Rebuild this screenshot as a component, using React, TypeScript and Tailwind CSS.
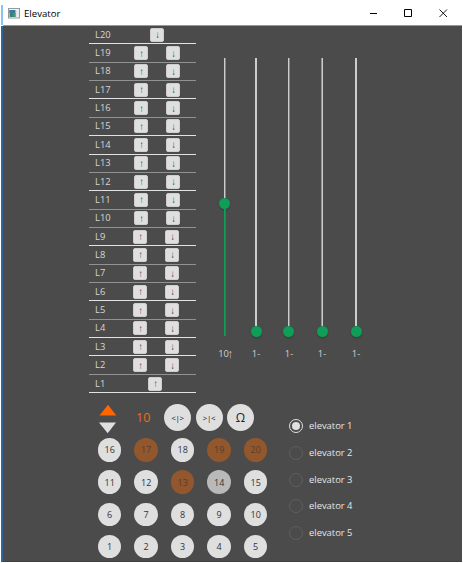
const FLOORS = Array.from({ length: 20 }, (_, i) => 20 - i);
const BRIGHT_RULES = [20, 17, 15, 14, 12, 9, 6, 4, 3, 1];
const KEYS = [
  [16, 17, 18, 19, 20],
  [11, 12, 13, 14, 15],
  [6, 7, 8, 9, 10],
  [1, 2, 3, 4, 5],
];
const LIT = [13, 17, 19, 20];

function CallButton({ arrow, className }: { arrow: string; className: string }) {
  return (
    <button
      className={`h-[14px] w-[14px] shrink-0 rounded-[2px] border border-[#cecece] bg-[#dfdfdf] text-center font-['Liberation_Sans',sans-serif] text-[10px] leading-[11px] text-[#222] ${className}`}
    >
      <span className="inline-block scale-x-75">{arrow}</span>
    </button>
  );
}

function FloorRow({ floor }: { floor: number }) {
  const rule = BRIGHT_RULES.includes(floor) ? 'border-[#e2e2e2]' : 'border-[#929292]';
  return (
    <div className={`flex h-[18.37px] items-center border-b pl-[6px] ${rule}`}>
      <span className="w-[38px] shrink-0 text-[9.4px] leading-[12px] text-[#d6d6d6]">L{floor}</span>
      {floor === 20 && <CallButton arrow="↓" className="ml-[17px]" />}
      {floor === 1 && <CallButton arrow="↑" className="ml-[15px]" />}
      {floor > 1 && floor < 20 && (
        <>
          <CallButton arrow="↑" className={floor > 9 ? 'ml-[1px]' : ''} />
          <CallButton arrow="↓" className="ml-[18px]" />
        </>
      )}
    </div>
  );
}

function Shaft({ floor, active, track, className }: { floor: number; active?: boolean; track: string; className: string }) {
  return (
    <div className={`flex w-[20px] shrink-0 flex-col items-center ${className}`}>
      <div className="flex h-[279px] flex-col items-center">
        <div className={`flex w-[2px] shrink-0 ${active ? 'h-[140px]' : 'h-[268px]'}`}>
          <div className={`w-[1px] ${track === 'right' ? 'bg-[#929292]' : 'bg-[#cdcdcd]'}`} />
          <div className={`w-[1px] ${track === 'left' ? 'bg-[#858585]' : 'bg-[#cdcdcd]'}`} />
        </div>
        <div
          className={`h-[11px] w-[11px] shrink-0 rounded-full bg-[#0f9d58] shadow-[0_1px_2px_rgba(0,0,0,0.25)] ${
            track === 'right' ? 'ml-[1px]' : active || track === 'left' ? '-ml-[1px]' : ''
          }`}
        />
        {active && (
          <div className="mb-[1px] flex w-[2px] flex-1">
            <div className="w-[1px] bg-[#0f9d58]" />
            <div className="w-[1px] bg-[#1b8852]" />
          </div>
        )}
      </div>
      <span className="mt-[10px] flex whitespace-nowrap text-[9.4px] leading-[14px] text-[#ccd0d4]">
        {floor}
        {active ? (
          <span className="-mx-[1px] inline-block scale-y-125 font-['Liberation_Sans',sans-serif] text-[10px]">↑</span>
        ) : (
          '-'
        )}
      </span>
    </div>
  );
}

function RoundButton({ children }: { children: string }) {
  return (
    <button className="h-[27px] w-[27px] rounded-full bg-[#dfdfdf] text-center text-[8px] leading-[27px] tracking-[-0.3px] text-[#111]">
      {children}
    </button>
  );
}

export default function App() {
  return (
    <div className="flex h-[563px] w-[463px] flex-col overflow-hidden bg-white pl-[1px] pr-[1px] font-['Open_Sans','Noto_Sans',sans-serif]">
      <header className="flex h-[25px] shrink-0">
        <div className="mt-[5px] w-[2px] bg-[#8ac4f0]" />
        <svg className="ml-[5px] mt-[8px]" width="12" height="11" viewBox="0 0 12 11">
          <rect x="0.5" y="0.5" width="11" height="9.5" fill="#f4f4f4" stroke="#929ba2" />
          <rect x="1.5" y="2" width="6" height="7" fill="#347e83" />
          <path d="M1.5 2h3v3h-3z" fill="#3c79a3" />
          <path d="M4.5 5h3v4h-3z" fill="#42966e" />
          <path d="M8.5 2v7M10 2v7" stroke="#d6d6d6" strokeWidth=".6" />
        </svg>
        <h1 className="ml-[4px] mt-[7px] text-[9.600px] leading-[14px] text-black">Elevator</h1>
        <svg className="ml-auto mr-[14px] mt-[8px]" width="79" height="10" viewBox="0 0 79 10" fill="none" stroke="#000">
          <path d="M1 5.5h7" />
          <path d="M35.5 1.5h7v7h-7z" />
          <path d="M70.5 1.5l7.5 7.5M78 1.5L70.500 9" strokeWidth=".9" />
        </svg>
      </header>
      <main className="flex h-[537px] shrink-0">
        <div className="mt-[1px] w-[2px] shrink-0 bg-[#2f6698]" />
        <div className="flex flex-1 border-b border-t border-b-[#414141] border-t-[#979797] bg-[#4b4b4b]">
          <section className="ml-[86px] w-[107px] shrink-0">
            <div>
              {FLOORS.map((f) => (
                <FloorRow key={f} floor={f} />
              ))}
            </div>
            <div className="mt-[11px] flex w-[180px] pl-[10px]">
              <svg width="18" height="30" viewBox="0 0 18 30">
                <path d="M0.500 11.500L9 .7L17.300 11.500z" fill="#ff6600" />
                <path d="M0 18.500h17L8.700 29.200z" fill="#dfdfdf" />
              </svg>
              <span className="ml-[19px] mt-[4px] w-[28px] text-[12.500px] leading-[20px] text-[#ef6a1a]">10</span>
              <div className="flex gap-[4.500px]">
                <RoundButton>{'<|>'}</RoundButton>
                <RoundButton>{'>|<'}</RoundButton>
                <button className="h-[27px] w-[27px] rounded-full bg-[#dfdfdf] text-center text-[12px] leading-[27px] text-[#222]">Ω</button>
              </div>
            </div>
            <div className="ml-[9px] mt-[4px] grid w-[170px] grid-cols-[repeat(5,23.400px)] gap-x-[13.100px] gap-y-[8.800px]">
              {KEYS.flat().map((n) => (
                <button
                  key={n}
                  className={`h-[23.400px] rounded-full text-center text-[9px] leading-[23px] ${
                    LIT.includes(n) ? 'bg-[#92572d] text-[#5a3d28]' : n === 14 ? 'bg-[#b9b9b9] text-[#333]' : 'bg-[#dfdfdf] text-[#333]'
                  }`}
                >
                  {n}
                </button>
              ))}
            </div>
          </section>
          <section className="ml-[18px] mt-[32px] flex flex-col">
            <div className="flex">
              <Shaft floor={10} active track="left" className="ml-[1px]" />
              <Shaft floor={1} track="both" className="ml-[11px]" />
              <Shaft floor={1} track="left" className="ml-[13px]" />
              <Shaft floor={1} track="right" className="ml-[13px]" />
              <Shaft floor={1} track="both" className="ml-[14px]" />
            </div>
            <div className="ml-[75px] mt-[58px] flex flex-col gap-[12.800px]">
              {[1, 2, 3, 4, 5].map((n) => (
                <label key={n} className="flex h-[14px] items-center">
                  <span
                    className={`flex h-[14px] w-[14px] items-center justify-center rounded-full ${
                      n === 1 ? 'border-[1.500px] border-[#dfdfdf]' : 'border border-[#5f5f5f]'
                    }`}
                  >
                    {n === 1 && <span className="h-[8px] w-[8px] rounded-full bg-[#dfdfdf]" />}
                  </span>
                  <span className="ml-[6px] text-[9.400px] leading-[14px] text-[#e6e6e6]">elevator {n}</span>
                </label>
              ))}
            </div>
          </section>
        </div>
      </main>
    </div>
  );
}
